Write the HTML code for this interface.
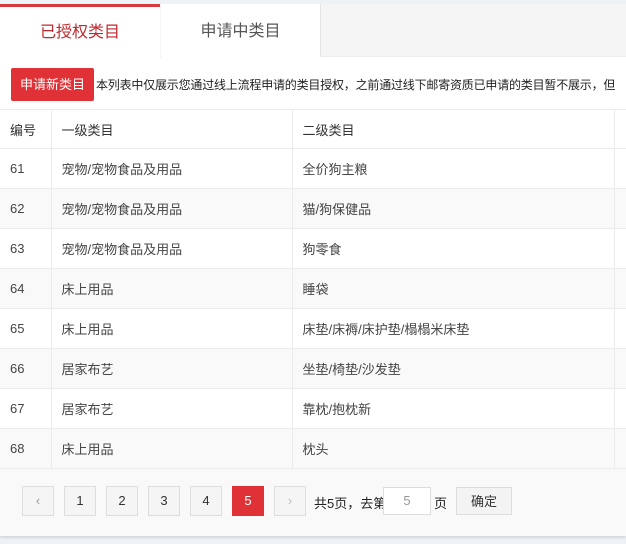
<!DOCTYPE html><html><head><meta charset="utf-8"><style>
*{margin:0;padding:0;box-sizing:border-box}
body{width:626px;height:544px;background:#eef2f7;font-family:"Liberation Sans","Noto Sans CJK SC",sans-serif;font-size:13px;color:#333;position:relative;overflow:hidden}
.wrap{position:absolute;left:0;top:4px;width:626px;height:532px;background:#fff;box-shadow:0 2px 2px #d5d8dc}
.tabs{height:53px;background:#f5f5f5;position:relative;border-bottom:1px solid #eee}
.tab{position:absolute;top:0;height:53px;width:160px;background:#fff;text-align:center;line-height:56px;font-size:16px;color:#555}
.t1{left:0;border-top:3px solid #d9383c;color:#c0282d;line-height:52px}
.t2{left:161px;border-right:1px solid #e5e5e5}
.bar{position:absolute;top:64px;left:11px;right:0;height:33px;white-space:nowrap;overflow:hidden}
.btn{display:inline-block;width:83px;height:33px;background:#e03236;color:#fff;border-radius:2px;text-align:center;line-height:33px;font-size:13px;vertical-align:middle}
.msg{font-size:12px;color:#222;vertical-align:middle;margin-left:2px;letter-spacing:-0.2px}
table{position:absolute;top:105px;left:0;border-collapse:collapse;width:640px}
td{border-top:1px solid #ebebeb;border-left:1px solid #ebebeb;height:40px;padding-left:10px;font-size:13px;color:#444}
tr:first-child td{height:39px;color:#333;border-top:1px solid #ebebeb;padding-top:0}
tr.g td{background:#f9f9f9}
.c1{width:51px;border-left:none}.c2{width:241px}.c3{width:322px}
.pg{position:absolute;top:464px;left:0;right:0;height:68px;background:#f9f9f9;border-top:1px solid #ebebeb}
.p{position:absolute;top:17px;width:32px;height:30px;border:1px solid #ddd;background:#f5f5f5;text-align:center;line-height:28px;font-size:13px;color:#333}
.p.a{background:#e03236;border-color:#e03236;color:#fff}
.txt{position:absolute;top:24px;font-size:13px;color:#222}
.in{position:absolute;left:383px;top:18px;width:48px;height:28px;border:1px solid #ddd;background:#fff;text-align:center;line-height:26px;color:#999}
.ok{position:absolute;left:456px;top:18px;width:56px;height:28px;border:1px solid #ddd;background:#f3f3f3;text-align:center;line-height:28px;color:#333}
</style></head><body><div class="wrap">
<div class="tabs"><div class="tab t1">已授权类目</div><div class="tab t2">申请中类目</div></div>
<div class="bar"><span class="btn">申请新类目</span><span class="msg">本列表中仅展示您通过线上流程申请的类目授权，之前通过线下邮寄资质已申请的类目暂不展示，但</span></div>
<table>
<tr><td class="c1">编号</td><td class="c2">一级类目</td><td class="c3">二级类目</td><td></td></tr>
<tr><td class="c1">61</td><td>宠物/宠物食品及用品</td><td>全价狗主粮</td><td></td></tr>
<tr class="g"><td class="c1">62</td><td>宠物/宠物食品及用品</td><td>猫/狗保健品</td><td></td></tr>
<tr><td class="c1">63</td><td>宠物/宠物食品及用品</td><td>狗零食</td><td></td></tr>
<tr class="g"><td class="c1">64</td><td>床上用品</td><td>睡袋</td><td></td></tr>
<tr><td class="c1">65</td><td>床上用品</td><td>床垫/床褥/床护垫/榻榻米床垫</td><td></td></tr>
<tr class="g"><td class="c1">66</td><td>居家布艺</td><td>坐垫/椅垫/沙发垫</td><td></td></tr>
<tr><td class="c1">67</td><td>居家布艺</td><td>靠枕/抱枕新</td><td></td></tr>
<tr class="g"><td class="c1">68</td><td>床上用品</td><td>枕头</td><td></td></tr>
</table>
<div class="pg">
<div class="p" style="left:22px;color:#999">&lsaquo;</div>
<div class="p" style="left:64px">1</div>
<div class="p" style="left:106px">2</div>
<div class="p" style="left:148px">3</div>
<div class="p" style="left:190px">4</div>
<div class="p a" style="left:232px">5</div>
<div class="p" style="left:274px;color:#bbb">&rsaquo;</div>
<div class="txt" style="left:314px">共5页，去第</div>
<div class="in">5</div>
<div class="txt" style="left:434px">页</div>
<div class="ok">确定</div>
</div>
</div></body></html>
